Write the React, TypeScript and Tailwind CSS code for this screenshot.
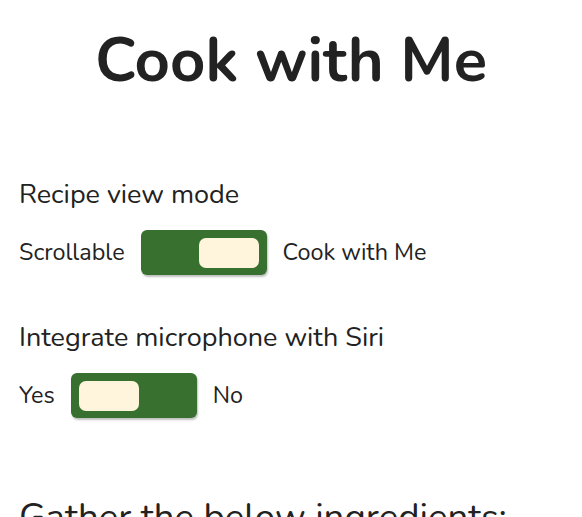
import { useState } from 'react'

function Toggle({ on, onChange }: { on: boolean; onChange: () => void }) {
  return (
    <button
      type="button"
      onClick={onChange}
      className={`flex h-[45px] w-[126px] items-center rounded-[6px] bg-[#38712f] px-[8px] shadow-[1px_2px_2px_rgba(0,0,0,0.25)] ${on ? 'justify-end' : 'justify-start'}`}
    >
      <span className="block h-[30px] w-[60px] rounded-[7px] bg-[#fef5dc]" />
    </button>
  )
}

export default function App() {
  const [cookMode, setCookMode] = useState(true)
  const [siri, setSiri] = useState(true)

  return (
    <div className="min-h-screen overflow-hidden bg-white px-[19px] text-[#222] [font-family:'Nunito','Lato','Open_Sans',sans-serif]">
      <h1 className="pt-[21px] text-center text-[61.5px] font-bold leading-[80px]">Cook with Me</h1>

      <section className="mt-[76px]">
        <h2 className="text-[27px] leading-[36px]">Recipe view mode</h2>
        <div className="mt-[17px] flex items-center gap-[16px] text-[23.4px]">
          <span>Scrollable</span>
          <Toggle on={cookMode} onChange={() => setCookMode(!cookMode)} />
          <span>Cook with Me</span>
        </div>
      </section>

      <section className="mt-[45px]">
        <h2 className="text-[27px] leading-[36px]">Integrate microphone with Siri</h2>
        <div className="mt-[17px] flex items-center gap-[16px] text-[23.4px]">
          <span>Yes</span>
          <Toggle on={!siri} onChange={() => setSiri(!siri)} />
          <span>No</span>
        </div>
      </section>

      <h2 className="mt-[75px] text-[36.6px] leading-[48px]">Gather the below ingredients:</h2>
    </div>
  )
}
